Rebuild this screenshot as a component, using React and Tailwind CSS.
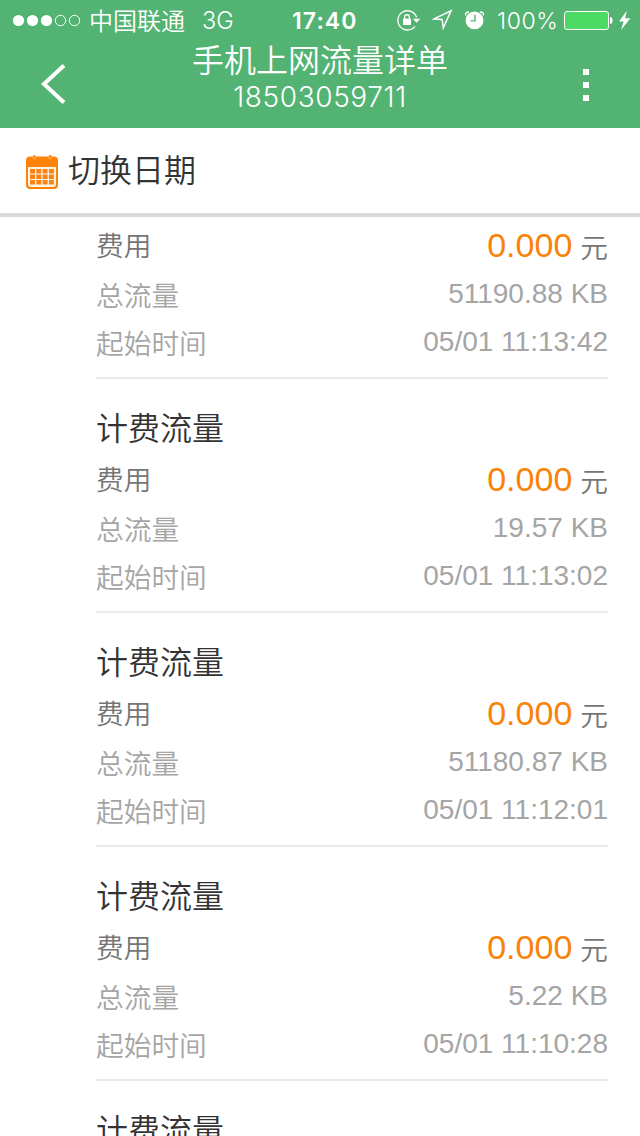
import React from 'react';

const records = [
  { total: '51190.88 KB', time: '05/01 11:13:42' },
  { title: '计费流量', total: '19.57 KB', time: '05/01 11:13:02' },
  { title: '计费流量', total: '51180.87 KB', time: '05/01 11:12:01' },
  { title: '计费流量', total: '5.22 KB', time: '05/01 11:10:28' },
];

function Signal() {
  return (
    <svg className="ml-3 h-[14px] w-[70px] shrink-0" viewBox="0 0 70 14" fill="none" stroke="white">
      <circle cx="6.5" cy="7.5" r="5.6" fill="white" stroke="none" />
      <circle cx="20.5" cy="7.5" r="5.6" fill="white" stroke="none" />
      <circle cx="34.5" cy="7.5" r="5.6" fill="white" stroke="none" />
      <circle cx="48.5" cy="7.5" r="5.2" />
      <circle cx="62.5" cy="7.5" r="5.2" />
    </svg>
  );
}

function StatusIcons() {
  return (
    <svg className="ml-[39px] h-6 w-[92px] shrink-0" viewBox="396 8 92 24" fill="none" stroke="white">
      <path d="M416.6 17.4A9.6 9.6 0 1 0 415 26.4" strokeWidth="1.3" />
      <path d="M412.8 18.8h7.4l-3.6 4z" fill="white" stroke="none" />
      <rect x="403" y="18.6" width="8" height="6.4" fill="white" stroke="none" />
      <path d="M404.6 19v-1.8a2.4 2.4 0 0 1 4.8 0V19" strokeWidth="1.4" />
      <path d="M434 18.9l17-8.2-7.7 17.2-1.2-8.4z" strokeWidth="1.5" />
      <circle cx="474.5" cy="20.4" r="8.9" fill="white" stroke="none" />
      <path d="M475 14.7v6.2h-4.6" stroke="#53b373" strokeWidth="1.4" />
      <path d="M465.7 15.4c-.8-2 1.3-4 3.4-3.1M483.3 15.4c.8-2-1.3-4-3.4-3.1" strokeWidth="1.4" />
    </svg>
  );
}

function Battery() {
  return (
    <svg className="ml-[4px] h-6 w-[70px] shrink-0" viewBox="563 8 70 24">
      <rect x="564.5" y="11.5" width="44" height="18" rx="2.5" fill="#4cd964" stroke="white" />
      <path d="M610 17c3.5 0 3.5 7 0 7z" fill="white" />
      <path d="M627 10.5l-8 11h4.6L621 30l9.4-11.7h-5.4z" fill="white" />
    </svg>
  );
}

function CalendarIcon() {
  return (
    <svg className="mt-[3px] h-[36px] w-[34px] shrink-0" viewBox="25 154 34 36">
      <rect x="26" y="156.5" width="32" height="32.5" rx="4" fill="#ff8209" />
      <path d="M28 167h28v17q0 3-3 3H31q-3 0-3-3z" fill="#fff5e6" />
      <path
        d="M30 169h5v4.4h-5zm6.3 0h5v4.4h-5zm6.3 0h5v4.4h-5zm6.3 0h5v4.4h-5zM30 174.5h5v4.4h-5zm6.3 0h5v4.4h-5zm6.3 0h5v4.4h-5zm6.3 0h5v4.4h-5zM30 180h5v4.4h-5zm6.3 0h5v4.4h-5zm6.3 0h5v4.4h-5zm6.3 0h5v4.4h-5z"
        fill="#fb8418"
      />
      <path d="M33 155h2.6v2.5a1.3 1.3 0 0 1-2.6 0zM48.8 155h2.6v2.5a1.3 1.3 0 0 1-2.6 0z" fill="#ff8209" stroke="#ffe3c4" strokeWidth=".5" />
    </svg>
  );
}

function Record({ title, total, time }) {
  return (
    <article className="ml-24 mr-8 border-b-2 border-[#ebebeb] pb-3">
      {title && <h2 className="h-[76px] pt-[23px] text-[32px] leading-[48px] text-[#333]">{title}</h2>}
      <div className="flex h-12 justify-between text-[27.7px] leading-[46px] text-[#757575]">
        <span>费用</span>
        <span className="flex">
          <span className="font-['Liberation_Sans'] text-[34px] leading-[48px] text-[#f98207]">0.000</span>
          <span className="ml-2 pt-[2px]">元</span>
        </span>
      </div>
      <div className="flex h-12 justify-between text-[27.7px] leading-[50px] text-[#a5a5a5]">
        <span>总流量</span>
        <span className="font-['Liberation_Sans'] text-[28px]">{total}</span>
      </div>
      <div className="flex h-12 justify-between text-[27.7px] leading-[50px] text-[#a5a5a5]">
        <span>起始时间</span>
        <span className="font-['Liberation_Sans'] text-[28px]">{time}</span>
      </div>
    </article>
  );
}

export default function App() {
  return (
    <div className="h-[1136px] w-[640px] overflow-hidden bg-white font-['Noto_Sans_CJK_SC',sans-serif] font-[350]">
      <header className="h-32 bg-[#53b373] text-white">
        <div className="flex h-10 items-center whitespace-nowrap leading-10">
          <Signal />
          <span className="ml-[7px] w-[96px] text-[24px]">中国联通</span>
          <span className="ml-[17px] w-[34px] pt-px font-[Inter] text-[23.5px]">3G</span>
          <span className="ml-[56px] w-[65px] pt-px font-[Inter] text-[23px] font-semibold tracking-[1.1px]">17:40</span>
          <StatusIcons />
          <span className="ml-[9px] w-[62px] pt-px font-[Inter] text-[23px] tracking-[0.6px]">100%</span>
          <Battery />
        </div>
        <div className="flex h-[88px]">
          <div className="flex w-[192px]">
            <svg className="ml-10 mt-[22px] h-11 w-7" viewBox="0 0 28 44" fill="none" stroke="white" strokeWidth="4">
              <path d="M24 3.5L4 22l20 18.5" />
            </svg>
          </div>
          <div className="w-64 text-center">
            <h1 className="h-10 whitespace-nowrap text-[32px] leading-9">手机上网流量详单</h1>
            <p className="font-[Inter] text-[28px] leading-[34px] tracking-[0.6px]">18503059711</p>
          </div>
          <div className="ml-[135px] mt-[29px] flex w-[6px] flex-col gap-[7px]">
            <i className="size-[6px] bg-white" />
            <i className="size-[6px] bg-white" />
            <i className="size-[6px] bg-white" />
          </div>
        </div>
      </header>
      <div className="flex h-[89px] items-center border-b-4 border-[#d9dad9] pl-[25px] text-[32px] text-[#333]">
        <CalendarIcon />
        <span className="ml-[9px] pb-[5px]">切换日期</span>
      </div>
      <main className="pt-1">
        {records.map((r) => (
          <Record key={r.time} {...r} />
        ))}
        <h2 className="ml-24 h-[76px] pt-[23px] text-[32px] leading-[48px] text-[#333]">计费流量</h2>
      </main>
    </div>
  );
}
